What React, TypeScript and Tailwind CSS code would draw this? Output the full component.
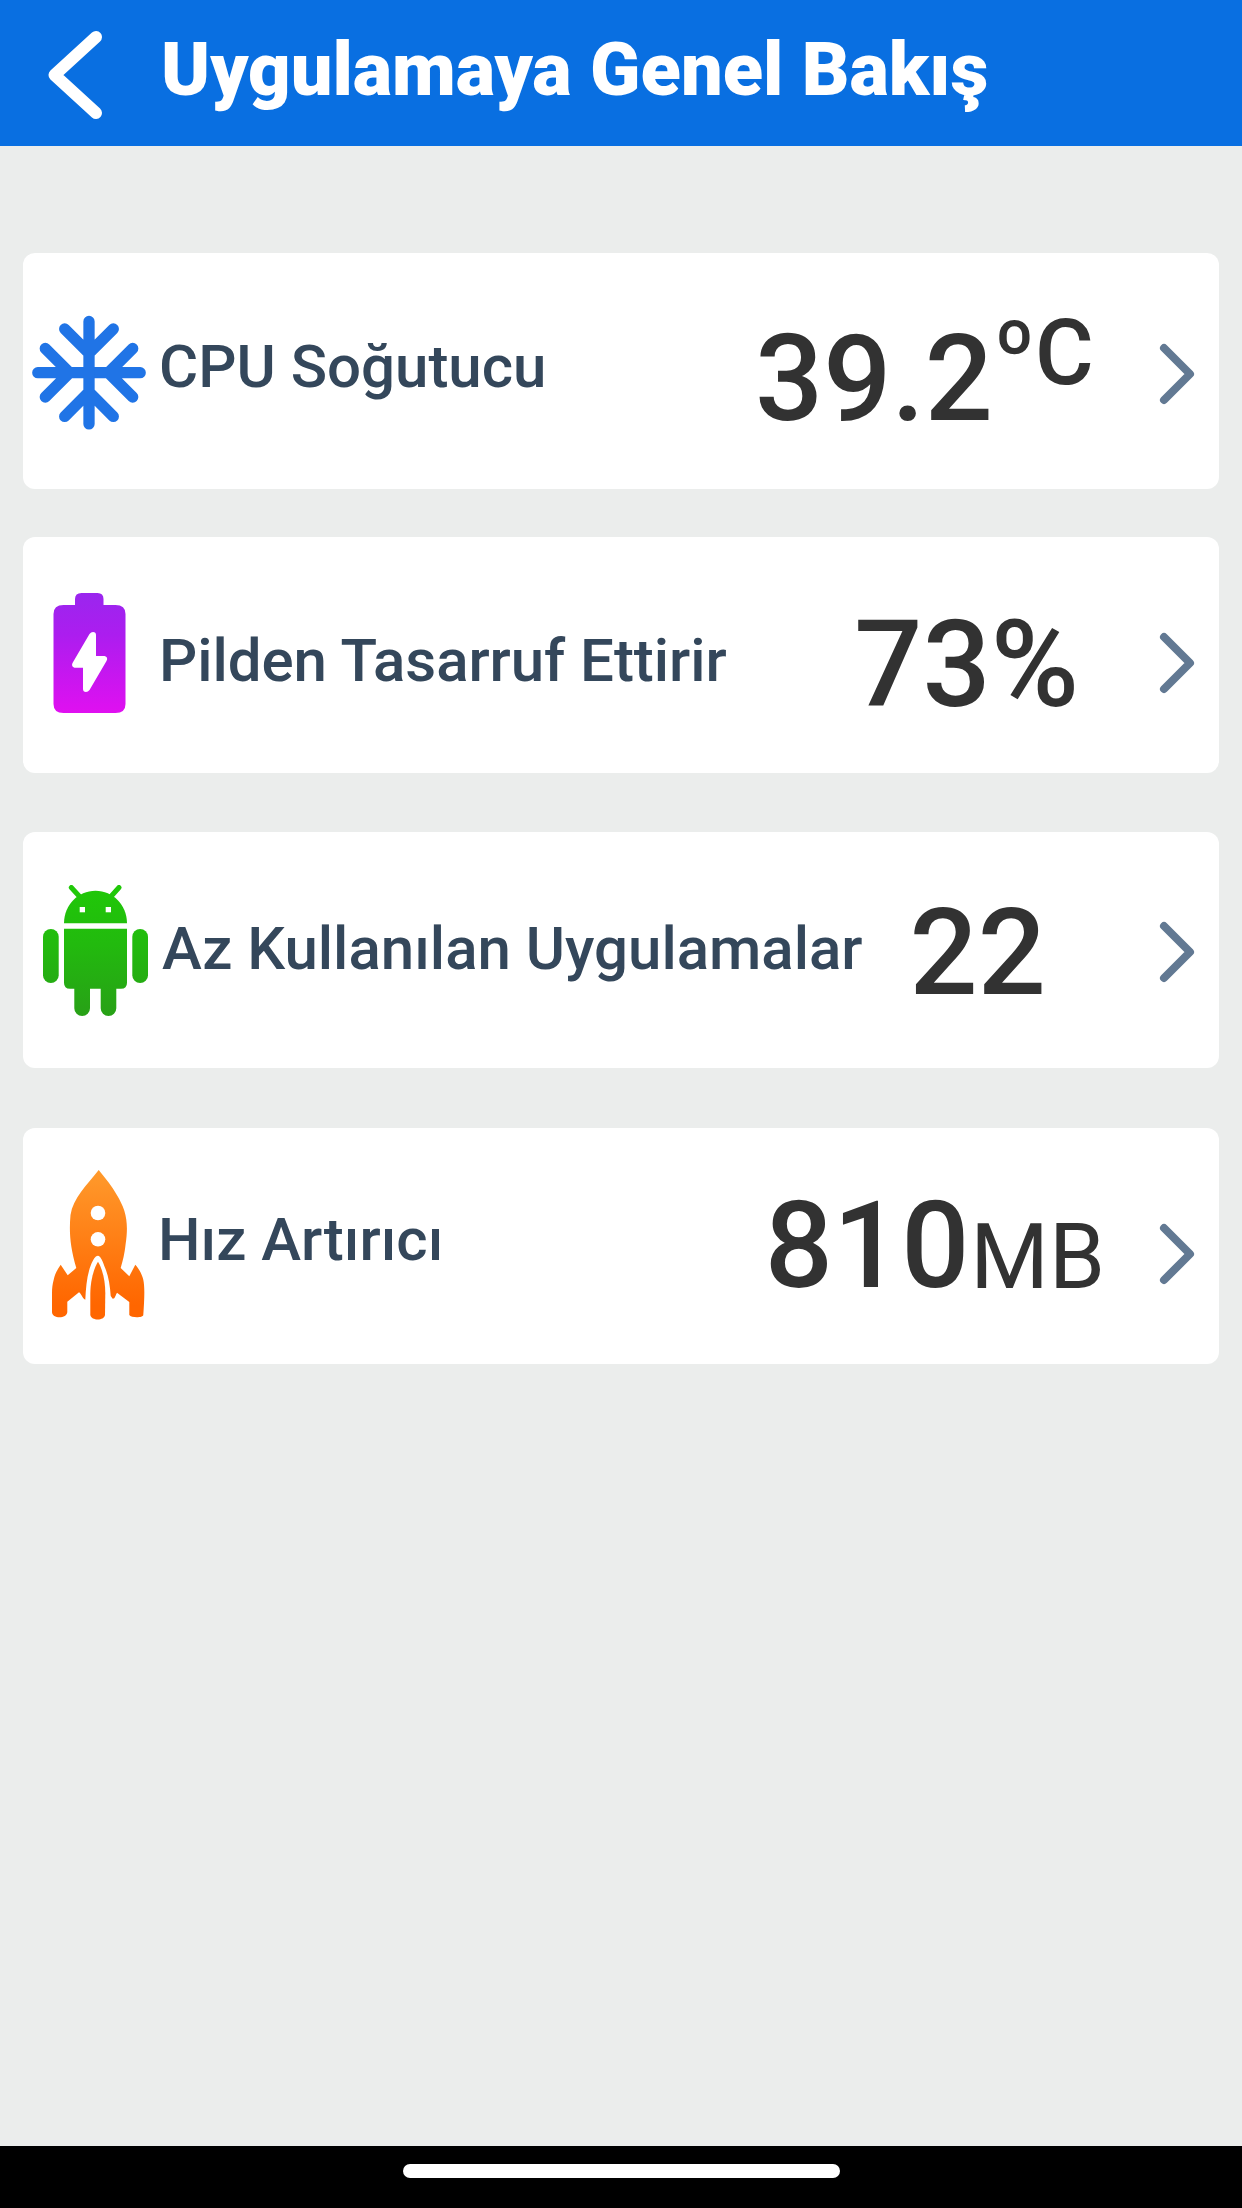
import React from 'react';

const font = 'font-[Roboto,sans-serif]';

function Chevron({ className }: { className: string }) {
  return (
    <svg className={className} viewBox="0 0 36 62" fill="none" stroke="#627993" strokeWidth="8" strokeLinecap="round" strokeLinejoin="round">
      <path d="M5 5 31 31 5 57" />
    </svg>
  );
}

function Snowflake() {
  return (
    <svg className="ml-[9px] mt-[62px] h-[116px] w-[114px] shrink-0" viewBox="-57 -57.700 114 116" fill="none" stroke="#2074e6" strokeWidth="11.3" strokeLinecap="round">
      {[0, 90, 180, 270].map((a) => (
        <path key={a} transform={`rotate(${a})`} d="M0 0V-51.2M0 -19.4 -24.3 -43.7M0 -19.4 24.3 -43.7" />
      ))}
    </svg>
  );
}

function Battery() {
  return (
    <svg className="ml-[30px] mt-[56px] h-[121px] w-[73px] shrink-0" viewBox="-0.5 0 73 121">
      <defs>
        <linearGradient id="bat" x1="0" y1="0" x2="0" y2="1">
          <stop offset="0" stopColor="#9a26ee" />
          <stop offset="0.35" stopColor="#ac1def" />
          <stop offset="1" stopColor="#e010f0" />
        </linearGradient>
      </defs>
      <path fill="url(#bat)" d="M28 0H44Q50 0 50 6V12H62Q72 12 72 21V111Q72 120 62 120H10Q0 120 0 111V21Q0 12 10 12H21.500V6Q21.500 0 28 0Z" />
      <path fill="#fff" d="M36 41Q37.500 39 39.500 39 42.500 39 42.500 42V63H51Q55 64 53 68L36 97Q34.500 99 32.500 99 29.500 99 29.500 96V74.700H21Q17.500 73.500 19 70Z" />
    </svg>
  );
}

function Robot() {
  return (
    <svg className="ml-[20px] mt-[53px] h-[132px] w-[105px] shrink-0" viewBox="0 0 105 132">
      <defs>
        <linearGradient id="bot" gradientUnits="userSpaceOnUse" x1="0" y1="0" x2="0" y2="132">
          <stop offset="0" stopColor="#20c808" />
          <stop offset="0.45" stopColor="#22ba0e" />
          <stop offset="1" stopColor="#28a017" />
        </linearGradient>
      </defs>
      <path d="M28.300 2.500 37 12M76 2.500 67.500 12" stroke="#20c808" strokeWidth="5" strokeLinecap="round" />
      <g fill="url(#bot)">
        <path d="M21 38.300C21 20 35 5.700 52.500 5.700S84 20 84 38.300Z" />
        <path d="M21 43.700H84V97.700Q84 103.700 78 103.700H73.300V123.200A7.800 7.800 0 0 1 57.700 123.200V103.700H47V123.200A7.800 7.800 0 0 1 31.300 123.200V103.700H27Q21 103.700 21 97.700Z" />
        <rect x="0" y="44" width="15.700" height="54" rx="7.850" />
        <rect x="89.300" y="44" width="15.700" height="54" rx="7.850" />
      </g>
      <rect x="36.700" y="22" width="5.300" height="5.300" fill="#fff" />
      <rect x="62.700" y="22" width="5.300" height="5.300" fill="#fff" />
    </svg>
  );
}

function Rocket() {
  return (
    <svg className="ml-[29px] mt-[42px] h-[151px] w-[93px] shrink-0" viewBox="0 0 93 151">
      <defs>
        <linearGradient id="roc" gradientUnits="userSpaceOnUse" x1="0" y1="0" x2="0" y2="150">
          <stop offset="0" stopColor="#ff9a2c" />
          <stop offset="0.9" stopColor="#ff6600" />
        </linearGradient>
      </defs>
      <g fill="url(#roc)">
        <path d="M46.700 0C54 9 60 16 64.700 24.700C74 40 77 52 73.500 75C72.500 84 71 90 68.700 98L77.300 106.300 83.300 94.700C88 100 90 105 91.300 109.700C93 118 92.300 130 91.300 145C91 148 79 148 77.300 145V132L65 122.700C63.500 125 63 129 60.700 128.700L58.700 126C58 114 56 104 52.300 96C50 89 48 86 46 85.700C43 86 41 90 39 94.700C35 105 34 116 33.300 129.700C30 128 29 123 27 122.300L15.300 131.700V142C15 149 0 149 0 142V123C0 118 .5 114 1.700 109.700C3 104 5 100 8.700 94.700L15.700 105.300 24.300 98C18 76 17 62 18.500 45C21 28 35 15 46.700 0Z" />
        <path d="M46 91.700C51 100 53.300 112 53.300 123L53 145C52 151 39.500 151 38.300 145V123C38.500 112 41 100 46 91.700Z" />
      </g>
      <circle cx="46" cy="43" r="7.300" fill="#fff" />
      <circle cx="46" cy="69.300" r="7.300" fill="#fff" />
    </svg>
  );
}

const card = 'flex h-[236px] rounded-[12px] bg-white';
const label = 'whitespace-nowrap font-medium leading-[70px] text-[#34475b] text-[60px]';
const value = 'ml-auto whitespace-nowrap font-medium leading-[120px] text-[#323232] text-[120px]';

export default function App() {
  return (
    <div className={`flex h-[2208px] w-[1242px] flex-col overflow-hidden bg-[#ebedec] ${font}`}>
      <header className="flex h-[146px] bg-[#096fe1]">
        <svg className="ml-[48px] mt-[30px] h-[90px] w-[56px]" viewBox="0 0 56 90" fill="none" stroke="#fff" strokeWidth="12" strokeLinecap="round" strokeLinejoin="round">
          <path d="M48 7 6.500 45 48 83" />
        </svg>
        <h1 className="ml-[57px] mt-[26px] text-[74px] leading-[87px] font-black text-white">Uygulamaya Genel Bakış</h1>
      </header>
      <main className="flex flex-1 flex-col px-[23px] pt-[107px]">
        <section className={card}>
          <Snowflake />
          <span className={`${label} ml-[13px] mt-[79px]`}>CPU Soğutucu</span>
          <span className={`${value} mt-[66px]`}>39.2</span>
          <span className="ml-px mt-[53px] w-[101px] whitespace-nowrap text-[90px] leading-[96px] font-medium text-[#323232]">ºC</span>
          <Chevron className="ml-[64px] mr-[24px] mt-[90px] h-[62px] w-[36px]" />
        </section>
        <section className={`${card} mt-[48px]`}>
          <Battery />
          <span className={`${label} ml-[33px] mt-[89px] tracking-[-0.05px]`}>Pilden Tasarruf Ettirir</span>
          <span className={`${value} mt-[68px]`}>73%</span>
          <Chevron className="ml-[80px] mr-[24px] mt-[95px] h-[62px] w-[36px]" />
        </section>
        <section className={`${card} mt-[59px]`}>
          <Robot />
          <span className={`${label} ml-[14px] mt-[82px]`}>Az Kullanılan Uygulamalar</span>
          <span className={`${value} mt-[61px]`}>22</span>
          <Chevron className="ml-[113px] mr-[24px] mt-[89px] h-[62px] w-[36px]" />
        </section>
        <section className={`${card} mt-[60px]`}>
          <Rocket />
          <span className={`${label} ml-[13px] mt-[77px]`}>Hız Artırıcı</span>
          <span className={`${value} mt-[58px]`}>810</span>
          <span className="ml-px mt-[82px] text-[90px] leading-[96px] text-[#323232]">MB</span>
          <Chevron className="ml-[54px] mr-[24px] mt-[95px] h-[62px] w-[36px]" />
        </section>
      </main>
      <footer className="flex h-[62px] justify-center bg-black pt-[18px]">
        <div className="h-[14px] w-[437px] rounded-full bg-white" />
      </footer>
    </div>
  );
}
